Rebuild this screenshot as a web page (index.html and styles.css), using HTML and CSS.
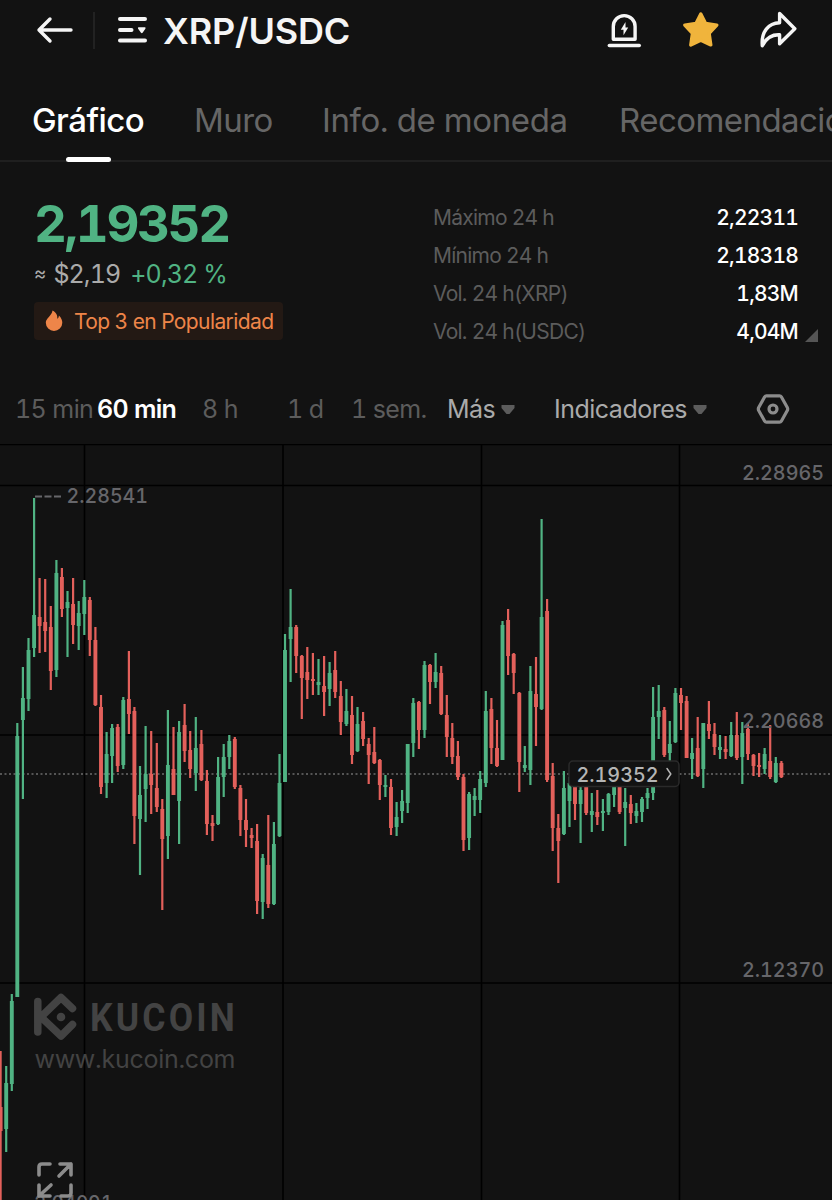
FILE: index.html
```
<!doctype html>
<html lang="es">
<head>
    <title>XRP/USDC</title>
    <meta charset="utf-8">
    <link rel="stylesheet" href="styles.css">
</head>
<body>
    <div id="page">
        <header class="top">
            <svg class="ico-back" width="38" height="28" viewBox="0 0 38 28">
                <path d="M15 3L4 14l11 11M4 14h32" />
            </svg>
            <div class="split"></div>
            <svg class="ico-list" width="32" height="28" viewBox="0 0 32 28">
                <path d="M3 3h25M3 14h11.500M3 24.500h25" />
                <path class="fill" d="M21.500 11.300h6.500q1 .3.400 1.400l-2.800 4q-.8.900-1.600 0l-2.900-4q-.6-1.100.4-1.400z" />
            </svg>
            <h1>XRP/USDC</h1>
            <div class="actions">
                <svg width="36" height="38" viewBox="0 0 36 38">
                    <path d="M7.300 28.200V15.500a10.900 10.900 0 0 1 21.800 0v12.700z" />
                    <path d="M3.300 34.500h30" />
                    <path class="fill" d="M19.500 11l-4.700 7.800h2.700v5.400l4.700-7.600h-2.700z" />
                </svg>
                <svg class="ico-star" width="40" height="38" viewBox="0 0 40 38">
                    <path d="M20.800 3l4.800 9.500 11.200 1.600-7.700 8.200 1.700 11.600-10-4.800-10 4.800 1.700-11.600L4.800 14.100 16 12.500z" />
                </svg>
                <svg width="40" height="38" viewBox="0 0 40 38">
                    <path d="M21.600 2.500L36.800 17.800 21.600 32.700V23.800C13.500 23.300 8 27.500 4.300 34.800 3 20.500 10.500 12.200 21.600 11.700z" />
                </svg>
            </div>
        </header>
        <nav class="tabs">
            <div class="tab active">Gráfico</div>
            <div class="tab muro">Muro</div>
            <div class="tab info">Info. de moneda</div>
            <div class="tab recom">Recomendaciones</div>
        </nav>
        <section class="summary">
            <div class="price-wrap">
                <div class="price">2,19352</div>
                <div class="fiat"><small>≈</small> <span>$2,19</span> <b>+0,32 %</b></div>
                <div class="badge">
                    <svg width="18" height="22" viewBox="0 0 18 22">
                        <path d="M7.500.5c4 2.200 5.200 5 4.800 8.200 1.100-.6 1.500-1.700 1.600-3.200 2.500 2.500 3.400 5 3.400 7.300A8.300 8.300 0 0 1 9 21 8.300 8.300 0 0 1 .8 12.800C.8 8 6.800 6 7.500.5z" />
                    </svg>
                    <span>Top 3 en Popularidad</span>
                </div>
            </div>
            <dl class="stats">
                <div><dt>Máximo 24 h</dt><dd>2,22311</dd></div>
                <div><dt>Mínimo 24 h</dt><dd>2,18318</dd></div>
                <div><dt>Vol. 24 h(XRP)</dt><dd>1,83M</dd></div>
                <div><dt>Vol. 24 h(USDC)</dt><dd class="last">4,04M</dd></div>
            </dl>
        </section>
        <div class="periods">
            <span class="p15">15 min</span>
            <span class="p60 active">60 min</span>
            <span class="p8">8 h</span>
            <span class="p1d">1 d</span>
            <span class="p1s">1 sem.</span>
            <span class="more">Más</span>
            <svg class="caret" width="14" height="11" viewBox="0 0 14 11"><path d="M.5 1h13v3L8.500 10h-3L.5 4z" /></svg>
            <span class="indic">Indicadores</span>
            <svg class="caret" width="14" height="11" viewBox="0 0 14 11"><path d="M.5 1h13v3L8.500 10h-3L.5 4z" /></svg>
            <svg class="ico-gear" width="34" height="32" viewBox="0 0 34 32">
                <path d="M10.500 2.800h13q1.200 0 1.800 1l6 10.700q.8 1.500 0 3l-6 10.700q-.6 1-1.800 1h-13q-1.200 0-1.800-1l-6-10.700q-.8-1.500 0-3l6-10.700q.6-1 1.800-1z" />
                <circle cx="17" cy="16" r="4" />
            </svg>
        </div>
        <svg id="chart" width="832" height="756" viewBox="0 444 832 756">
            <path class="grid" d="M0 444.500H832M0 485.500H832M0 735H832M0 983H832M84.500 444V1200M283 444V1200M481.500 444V1200M679.500 444V1200" />
            <g class="mark">
                <path d="M37.800 1001.500V1032M41 1017L61 997.500 72.500 1008.500M41 1017L61 1036 72.500 1024.500" />
                <circle cx="61" cy="1017" r="4.300" />
                <text class="brand" x="99" y="1031" textLength="159" transform="scale(.91 1)">KUCOIN</text>
                <text class="site" x="34.500" y="1068" textLength="201">www.kucoin.com</text>
            </g>
            <path class="now" d="M0 774H832" />
            <g id="candles"></g>
            <g class="labels">
                <text x="742" y="479.500" textLength="82" lengthAdjust="spacingAndGlyphs">2.28965</text>
                <text x="742" y="728" textLength="82" lengthAdjust="spacingAndGlyphs">2.20668</text>
                <text x="742" y="977" textLength="82" lengthAdjust="spacingAndGlyphs">2.12370</text>
                <text x="66.500" y="503" textLength="81.500" lengthAdjust="spacingAndGlyphs">2.28541</text>
                <text x="34" y="1210" textLength="79" lengthAdjust="spacingAndGlyphs">2.04091</text>
                <path d="M35 496.500h26" />
            </g>
            <g class="tag">
                <rect x="569" y="761" width="110" height="25.500" rx="4" />
                <text x="576.500" y="782" textLength="82" lengthAdjust="spacingAndGlyphs">2.19352</text>
                <path d="M667 768.500l3.800 5.500-3.800 5.500" />
            </g>
            <path class="expand" d="M39 1175v-8q0-3 3-3h8M60 1164h11v11M71 1164l-12 12M39 1185v11h11M39 1196l12-11M71 1185v8q0 3-3 3h-7" />
        </svg>
    </div>
    <script src="chart.js"></script>
</body>
</html>
```
FILE: chart.js
```
/* color, high, body top, body bottom, low */
const candles = `
r 1051 1107 1131 1210|g 1066 1083 1129 1152|g 994 1001 1084 1091|g 723 736 997 997|g 667 698 720 799
g 638 650 699 711|g 498 615 648 657|r 578 617 626 653|r 579 622 631 652|r 606 627 671 690
g 560 573 670 677|r 568 577 609 617|g 591 602 608 657|r 578 604 625 644|g 601 613 626 650
g 580 597 614 635|r 597 600 640 656|r 627 640 705 706|r 695 707 787 794|g 732 754 783 798
g 724 728 756 783|r 724 727 766 772|g 697 700 765 769|r 651 699 714 734|r 707 711 816 844
g 766 795 819 875|g 726 774 789 822|r 731 774 785 814|r 743 788 807 812|r 799 809 839 910
g 710 765 836 859|r 727 769 795 795|g 721 732 801 844|r 704 725 751 762|r 731 750 769 778
g 717 748 773 791|r 730 744 780 781|r 770 781 824 835|r 815 823 826 841|g 757 777 824 825
g 744 757 777 797|g 735 741 757 769|r 737 739 787 789|r 785 788 820 836|r 799 820 830 847
r 828 835 838 848|r 824 841 901 914|g 854 858 902 919|r 815 865 904 908|g 822 844 904 905
g 754 783 836 837|g 634 650 782 782|g 589 627 639 682|r 625 627 656 673|r 655 656 678 719
r 647 672 680 699|r 653 679 681 695|g 659 682 685 695|r 656 686 692 716|g 662 673 689 706
r 651 670 692 698|r 681 696 722 735|g 689 711 724 726|r 696 715 755 764|g 707 724 751 752
r 712 721 739 746|r 738 744 755 784|r 727 752 763 764|r 759 760 785 800|g 775 785 787 797
r 779 787 828 835|g 802 817 827 836|g 790 801 811 823|g 744 744 803 813|g 698 703 743 757
r 701 702 730 749|g 661 665 730 738|r 664 665 682 704|g 653 672 682 688|r 666 673 714 715
r 695 715 737 757|r 723 738 757 764|r 741 756 777 780|r 774 777 840 851|g 792 794 838 850
g 788 796 800 816|g 771 779 800 813|g 691 711 783 787|r 698 709 748 764|r 720 748 766 767
g 621 625 760 760|r 609 620 656 675|r 653 654 673 694|r 692 693 762 792|g 746 765 768 772
g 666 691 770 785|r 657 694 707 746|g 519 617 709 710|r 599 611 780 782|r 763 776 828 851
r 814 828 841 883|g 771 788 834 835|g 777 783 801 827|r 765 780 804 820|g 770 790 804 843
r 775 780 813 815|g 793 811 815 832|r 790 812 817 825|g 799 811 813 831|g 793 794 812 815
g 780 784 795 807|r 780 784 812 814|g 788 802 808 846|r 795 804 813 824|g 803 811 816 823
g 797 799 812 822|g 788 793 798 809|g 687 717 793 800|g 685 711 717 739|r 707 710 755 757
g 721 744 753 762|g 688 693 742 743|r 688 695 703 730|r 696 701 758 758|g 738 753 759 779
r 717 748 776 777|g 723 723 769 788|r 701 724 731 739|r 723 734 747 755|g 735 747 750 759
r 736 749 752 759|g 722 735 756 757|r 712 735 758 760|g 722 733 757 784|r 723 729 754 760
r 754 755 766 776|r 753 765 767 777|g 748 754 769 774|r 725 761 777 779|g 757 763 782 783
r 761 763 777 778`.trim().split(/[|\n]/);

const step = 5.577;
let out = "";

candles.forEach((row, i) => {
    const [color, high, top, bottom, low] = row.split(" ");
    const x = (0.6 + i * step).toFixed(1);
    out += `<path class="${color} wick" d="M${x} ${high}V${low}" />`;
    out += `<path class="${color} body" d="M${x} ${top}V${bottom}" />`;
});

document.querySelector("#candles").innerHTML = out;
```
FILE: styles.css
```
body {
    margin: 0;
    background: #121212;
    color: #f5f5f5;
    font-family: Inter, "Liberation Sans", sans-serif;
    font-variant-numeric: tabular-nums;
    overflow: hidden;
}

#page {
    width: 832px;
    height: 1200px;
    overflow: hidden;
}

svg {
    display: block;
    flex: none;
    fill: none;
    stroke: #f5f5f5;
    stroke-width: 3.4;
    stroke-linecap: round;
    stroke-linejoin: round;
}

svg .fill {
    fill: #f5f5f5;
    stroke: none;
}

.top {
    display: flex;
    align-items: center;
    height: 60px;
    padding: 0 34px 0 35px;
}

.split {
    width: 2px;
    height: 37px;
    margin: 0 22px 0 20px;
    background: #222;
}

.ico-list {
    stroke-width: 4;
}

h1 {
    width: 187px;
    margin: 2px 0 0 14px;
    font-size: 36px;
    font-weight: 600;
    letter-spacing: -.2px;
}

.actions {
    display: flex;
    gap: 38px;
    margin-left: auto;
}

.ico-star {
    fill: #f0b43c;
    stroke: #f0b43c;
}

.tabs {
    display: flex;
    box-sizing: border-box;
    height: 102px;
    padding-left: 32px;
    border-bottom: 2px solid #1f1f1f;
    font-size: 33px;
    line-height: 120px;
    letter-spacing: -.55px;
    color: #666;
    white-space: nowrap;
}

.tab {
    flex: none;
}

.tab.active {
    position: relative;
    width: 112px;
    margin-right: 50px;
    font-weight: 500;
    color: #fff;
}

.tab.active::after {
    content: "";
    position: absolute;
    left: 34px;
    top: 97px;
    width: 45px;
    height: 5px;
    border-radius: 3px;
    background: #fff;
}

.muro {
    width: 128px;
}

.info {
    width: 297px;
    letter-spacing: -.4px;
}

.summary {
    display: flex;
    justify-content: space-between;
    height: 213px;
    padding: 0 34px;
}

.price {
    margin-top: 32px;
    font-size: 51px;
    line-height: 60px;
    font-weight: 700;
    letter-spacing: -2.4px;
    color: #50b383;
}

.fiat {
    display: flex;
    gap: 8px;
    margin-top: 5px;
    font-size: 25px;
    line-height: 30px;
    letter-spacing: -.9px;
    color: #aaa;
}

.fiat small {
    font-size: 19px;
}

.fiat b {
    margin-left: 2px;
    font-weight: 400;
    color: #50b383;
}

.badge {
    display: flex;
    align-items: center;
    box-sizing: border-box;
    width: 249px;
    height: 38px;
    margin-top: 13px;
    padding-left: 11px;
    border-radius: 4px;
    background: #231914;
    font-size: 21px;
    letter-spacing: -.6px;
    color: #ee8549;
    white-space: nowrap;
}

.badge svg {
    margin-right: 11px;
    fill: #ee8549;
    stroke: none;
}

.stats {
    width: 365px;
    margin: 37px 0 0;
    font-size: 21px;
    line-height: 38px;
}

.stats div {
    display: flex;
    justify-content: space-between;
}

.stats dt {
    letter-spacing: -.75px;
    color: #5c5c5c;
}

.stats dd {
    margin: 0;
    font-weight: 500;
    letter-spacing: -.8px;
    color: #fff;
}

.stats .last {
    position: relative;
}

/* corner mark next to the last value */
.last::after {
    content: "";
    position: absolute;
    right: -20px;
    bottom: 9px;
    border-left: 13px solid transparent;
    border-bottom: 13px solid #555;
}

.periods {
    display: flex;
    align-items: center;
    height: 69px;
    padding-left: 15px;
    font-size: 25px;
    line-height: 28px;
    letter-spacing: -.6px;
    color: #5c5c5c;
    white-space: nowrap;
}

.periods span {
    flex: none;
    margin-bottom: 2px;
}

.periods .active {
    font-weight: 600;
    letter-spacing: -.7px;
    color: #fff;
}

.p15 {
    width: 82px;
}

.p60 {
    width: 105px;
}

.p8 {
    width: 85px;
}

.p1d {
    width: 64px;
}

.p1s {
    width: 96px;
}

.more {
    width: 54px;
    color: #aaa;
}

.periods .indic {
    width: 139px;
    margin-left: 39px;
    letter-spacing: -.5px;
    color: #aaa;
}

.caret {
    fill: #5c5c5c;
    stroke: none;
}

.ico-gear {
    margin: 0 0 2px 49px;
    stroke: #8c8c8c;
    stroke-width: 3.2;
}

.grid {
    stroke: #000;
    stroke-width: 1.6;
}

.now {
    stroke: #555;
    stroke-width: 1.8;
    stroke-dasharray: 2 2.5;
    stroke-linecap: butt;
}

.wick {
    stroke-width: 2.2;
    stroke-linecap: butt;
}

.body {
    stroke-width: 3.9;
    stroke-linecap: butt;
}

.g {
    stroke: #50b383;
}

.r {
    stroke: #e3605b;
}

text {
    stroke: none;
}

.labels text {
    font-size: 20.5px;
    font-weight: 500;
    fill: #66666a;
}

.labels path {
    stroke: #66666a;
    stroke-width: 2;
    stroke-dasharray: 7 2.5;
    stroke-linecap: butt;
}

.tag rect {
    fill: #121212;
    stroke: #2a2a2a;
    stroke-width: 1.5;
}

.tag text {
    font-size: 20.5px;
    font-weight: 500;
    fill: #b5b5b5;
}

.tag path {
    stroke: #b5b5b5;
    stroke-width: 1.5;
}

.mark path {
    stroke: #434343;
    stroke-width: 7.5;
}

.mark circle {
    fill: #434343;
    stroke: none;
}

.mark text {
    fill: #434343;
}

.brand {
    font-family: Roboto, sans-serif;
    font-size: 39px;
    font-weight: 700;
}

.site {
    font-size: 25px;
}

.expand {
    stroke: #8c8c8c;
    stroke-width: 3.6;
}
```
